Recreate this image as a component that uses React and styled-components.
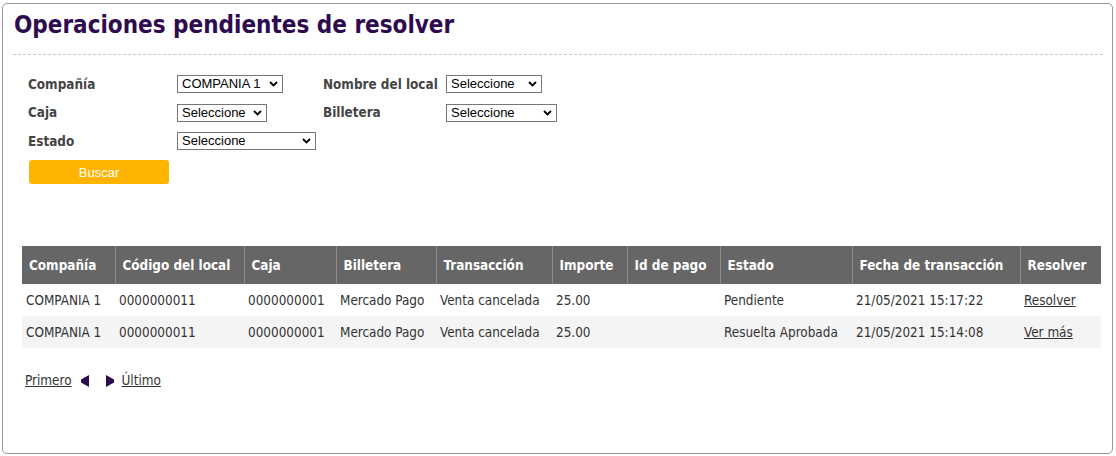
import React from "react";
import styled, { createGlobalStyle } from "styled-components";

const Global = createGlobalStyle`
  html, body { margin: 0; padding: 0; background: #fff; }
  body { font-family: "DejaVu Sans Condensed", "DejaVu Sans", Verdana, sans-serif; color: #333; }
`;

const Panel = styled.div`
  box-sizing: border-box;
  margin: 3px 3px 0 2px;
  width: 1111px;
  height: 451px;
  border: 1px solid #9a9a9a;
  border-radius: 5px;
  padding: 7px 9px 0 10px;
`;

const Title = styled.h1`
  margin: 0 0 0 1px;
  font-family: "DejaVu Sans Condensed", "DejaVu Sans", sans-serif;
  font-weight: bold;
  font-size: 24px;
  line-height: 28px;
  color: #2e0b4f;
`;

const Divider = styled.hr`
  margin: 15px 0 0 0;
  border: 0;
  border-top: 1px dashed #c8c8c8;
  height: 0;
`;

const Form = styled.div`
  display: grid;
  grid-template-columns: 149px 146px 123px auto;
  grid-auto-rows: 18px;
  row-gap: 10.5px;
  align-items: center;
  margin: 19px 0 0 15px;
`;

const Label = styled.span`
  font-weight: bold;
  font-size: 13.4px;
  color: #454545;
  line-height: 18px;
  position: relative;
  top: 1.5px;
`;

const SelectWrap = styled.div`
  position: relative;
  display: inline-flex;
  width: ${(p) => p.$w}px;
  height: 18px;
`;

const NativeSelect = styled.select`
  appearance: none;
  -webkit-appearance: none;
  box-sizing: border-box;
  width: 100%;
  height: 18px;
  margin: 0;
  padding: 0 0 0 4px;
  border: 1px solid #767676;
  border-radius: 0;
  background: #fff;
  font-family: "Liberation Sans", Arial, sans-serif;
  font-size: 13px;
  line-height: 16px;
  color: #000;
  outline: none;
`;

const Chevron = styled.svg`
  position: absolute;
  right: 5px;
  top: 6px;
  width: 9px;
  height: 6px;
  pointer-events: none;
`;

const Select = ({ w, value }) => (
  <SelectWrap $w={w}>
    <NativeSelect defaultValue={value}>
      <option>{value}</option>
    </NativeSelect>
    <Chevron viewBox="0 0 9 6">
      <path d="M1 1 L4.5 4.5 L8 1" fill="none" stroke="#000" strokeWidth="1.8" />
    </Chevron>
  </SelectWrap>
);

const Empty = styled.span``;

const Button = styled.button`
  display: block;
  margin: 11px 0 0 16px;
  width: 140px;
  height: 24px;
  border: 0;
  border-radius: 3px;
  background: #ffb400;
  color: #fff;
  font-family: "Liberation Sans", Arial, sans-serif;
  font-size: 13px;
  padding: 0;
`;

const Table = styled.table`
  margin: 62px 0 0 9px;
  width: 1079px;
  border-collapse: collapse;
  table-layout: fixed;
  font-size: 13.4px;
`;

const Th = styled.th`
  height: 38px;
  padding: 0 0 0 7px;
  background: #666;
  color: #fff;
  font-weight: bold;
  text-align: left;
  white-space: nowrap;
  border-right: 1px solid #8c8c8c;
  &:last-child { border-right: 0; }
`;

const Tr = styled.tr`
  background: ${(p) => (p.$alt ? "#f4f4f4" : "#fff")};
`;

const Td = styled.td`
  height: 32px;
  padding: 0 0 0 4px;
  color: #333;
  white-space: nowrap;
`;

const Link = styled.a`
  color: #333;
  text-decoration: underline;
  cursor: pointer;
`;

const Pager = styled.div`
  display: flex;
  align-items: center;
  margin: 25px 0 0 12px;
  font-size: 13.4px;
  line-height: 16px;
`;

const Arrow = styled.svg`
  display: block;
  flex: 0 0 auto;
  width: 8px;
  height: 12px;
  margin: 0 ${(p) => p.$mr}px 0 ${(p) => p.$ml}px;
  fill: #2e0b4f;
`;

const cols = [93, 129, 92, 100, 116, 75, 93, 132, 168, 81];
const heads = [
  "Compañía",
  "Código del local",
  "Caja",
  "Billetera",
  "Transacción",
  "Importe",
  "Id de pago",
  "Estado",
  "Fecha de transacción",
  "Resolver",
];
const rows = [
  ["COMPANIA 1", "0000000011", "0000000001", "Mercado Pago", "Venta cancelada", "25.00", "", "Pendiente", "21/05/2021 15:17:22", "Resolver"],
  ["COMPANIA 1", "0000000011", "0000000001", "Mercado Pago", "Venta cancelada", "25.00", "", "Resuelta Aprobada", "21/05/2021 15:14:08", "Ver más"],
];

export default function App() {
  return (
    <>
      <Global />
      <Panel>
        <Title>Operaciones pendientes de resolver</Title>
        <Divider />
        <Form>
          <Label>Compañía</Label>
          <div><Select w={106} value="COMPANIA 1" /></div>
          <Label>Nombre del local</Label>
          <div><Select w={96} value="Seleccione" /></div>
          <Label>Caja</Label>
          <div><Select w={90} value="Seleccione" /></div>
          <Label>Billetera</Label>
          <div><Select w={111} value="Seleccione" /></div>
          <Label>Estado</Label>
          <div><Select w={139} value="Seleccione" /></div>
          <Empty />
          <Empty />
        </Form>
        <Button>Buscar</Button>
        <Table>
          <colgroup>
            {cols.map((w, i) => (
              <col key={i} style={{ width: w }} />
            ))}
          </colgroup>
          <thead>
            <tr>
              {heads.map((h) => (
                <Th key={h}>{h}</Th>
              ))}
            </tr>
          </thead>
          <tbody>
            {rows.map((r, i) => (
              <Tr key={i} $alt={i % 2 === 1}>
                {r.map((c, j) => (
                  <Td key={j}>{j === 9 ? <Link>{c}</Link> : c}</Td>
                ))}
              </Tr>
            ))}
          </tbody>
        </Table>
        <Pager>
          <Link>Primero</Link>
          <Arrow viewBox="0 0 8 12" $ml={9} $mr={17}>
            <polygon points="0,4.5 8,0 8,12 0,7.5" />
          </Arrow>
          <Arrow viewBox="0 0 8 12" $ml={0} $mr={8}>
            <polygon points="0,0 8,4.5 8,7.5 0,12" />
          </Arrow>
          <Link>Último</Link>
        </Pager>
      </Panel>
    </>
  );
}
